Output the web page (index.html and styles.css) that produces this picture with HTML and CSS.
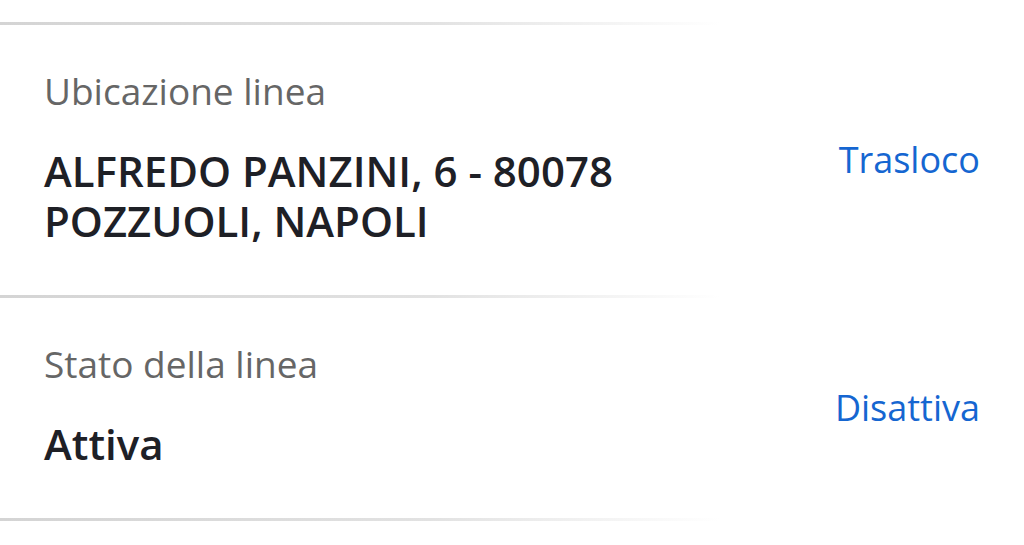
FILE: index.html
```html
<!DOCTYPE html>
<html lang="it">
<head>
    <meta charset="UTF-8">
    <meta name="viewport" content="width=device-width, initial-scale=1.0">
    <title>Dettagli linea</title>
    <link rel="stylesheet" href="styles.css">
</head>
<body>
    <div class="list">
        <div class="divider"></div>
        <div class="row">
            <div class="info">
                <div class="label">Ubicazione linea</div>
                <div class="value">ALFREDO PANZINI, 6 - 80078<br>POZZUOLI, NAPOLI</div>
            </div>
            <a class="action" href="#">Trasloco</a>
        </div>
        <div class="divider"></div>
        <div class="row">
            <div class="info">
                <div class="label">Stato della linea</div>
                <div class="value">Attiva</div>
            </div>
            <a class="action" href="#">Disattiva</a>
        </div>
        <div class="divider"></div>
    </div>
</body>
</html>
```

FILE: styles.css
```css
body {
    margin: 0;
    background: #fff;
    font-family: "Open Sans", "Noto Sans", sans-serif;
}
.list {
    padding-top: 22px;
}
.divider {
    height: 3px;
    width: 720px;
    background: linear-gradient(to right, #d4d4d4 0%, #e2e2e2 60%, rgba(255, 255, 255, 0) 100%);
}
.row {
    display: flex;
    align-items: center;
    justify-content: space-between;
    padding: 0 44px;
}
.info {
    padding: 43px 0 49px;
}
.label {
    font-size: 37px;
    line-height: 46px;
    color: #666;
    margin-bottom: 32px;
}
.value {
    font-size: 42px;
    line-height: 50px;
    font-weight: 600;
    color: #1e2026;
}
.action {
    font-size: 36px;
    line-height: 46px;
    color: #1566d1;
    text-decoration: none;
}
```
